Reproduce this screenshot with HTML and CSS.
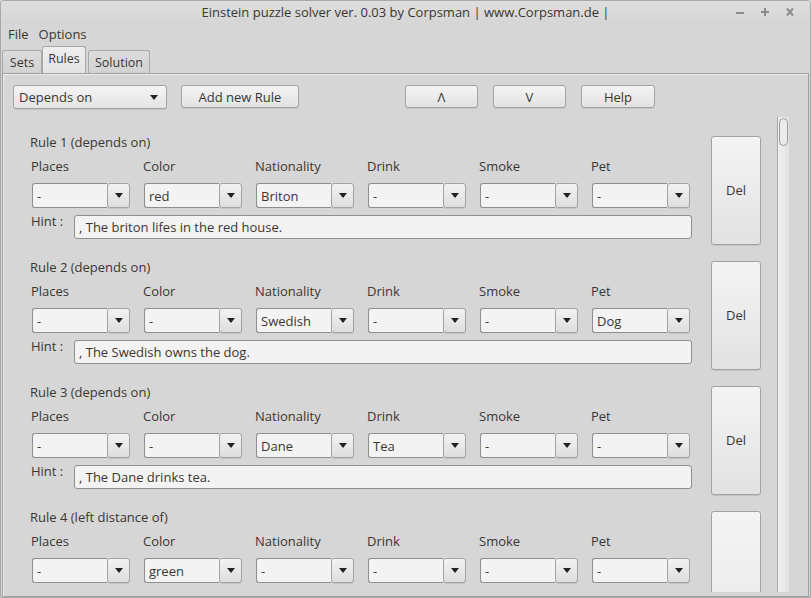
FILE: index.html
```html
<!DOCTYPE html>
<html>
<head>
<meta charset="utf-8">
<link rel="stylesheet" href="styles.css">
</head>
<body>
<div class="window">
  <div class="titlebar">
    <span class="title">Einstein puzzle solver ver. 0.03 by Corpsman | www.Corpsman.de |</span>
    <div class="controls">
      <svg width="10" height="10" viewBox="0 0 10 10"><rect x="1" y="5" width="8" height="2" fill="#8c8c8c"/></svg>
      <svg width="10" height="10" viewBox="0 0 10 10"><rect x="1" y="4" width="8" height="2" fill="#8c8c8c"/><rect x="4" y="1" width="2" height="8" fill="#8c8c8c"/></svg>
      <svg width="10" height="10" viewBox="0 0 10 10"><path d="M2 1.5 L8 8.5 M8 1.5 L2 8.5" stroke="#8c8c8c" stroke-width="2"/></svg>
    </div>
  </div>
  <div class="menubar"><span class="menu">File</span><span class="menu">Options</span></div>
  <div class="tabs">
    <div class="tab sets">Sets</div>
    <div class="tab active">Rules</div>
    <div class="tab solution">Solution</div>
  </div>
  <div class="panel">
    <div class="toolbar">
      <div class="bigcombo"><span>Depends on</span><span class="arrow"></span></div>
      <div class="btn add">Add new Rule</div>
      <div class="btn up">Λ</div>
      <div class="btn down">V</div>
      <div class="btn help">Help</div>
    </div>
    <div class="scrollarea">
      <div class="rules">
        <div class="rule">
          <div class="rule-main">
            <div class="rule-title">Rule 1 (depends on)</div>
            <div class="labels"><span>Places</span><span>Color</span><span>Nationality</span><span>Drink</span><span>Smoke</span><span>Pet</span></div>
            <div class="combos">
              <div class="combo"><div class="edit">-</div><div class="drop"><span class="arrow"></span></div></div>
              <div class="combo"><div class="edit">red</div><div class="drop"><span class="arrow"></span></div></div>
              <div class="combo"><div class="edit">Briton</div><div class="drop"><span class="arrow"></span></div></div>
              <div class="combo"><div class="edit">-</div><div class="drop"><span class="arrow"></span></div></div>
              <div class="combo"><div class="edit">-</div><div class="drop"><span class="arrow"></span></div></div>
              <div class="combo"><div class="edit">-</div><div class="drop"><span class="arrow"></span></div></div>
            </div>
            <div class="hint"><span class="hint-label">Hint :</span><div class="hint-input">, The briton lifes in the red house.</div></div>
          </div>
          <div class="btn del">Del</div>
        </div>
        <div class="rule">
          <div class="rule-main">
            <div class="rule-title">Rule 2 (depends on)</div>
            <div class="labels"><span>Places</span><span>Color</span><span>Nationality</span><span>Drink</span><span>Smoke</span><span>Pet</span></div>
            <div class="combos">
              <div class="combo"><div class="edit">-</div><div class="drop"><span class="arrow"></span></div></div>
              <div class="combo"><div class="edit">-</div><div class="drop"><span class="arrow"></span></div></div>
              <div class="combo"><div class="edit">Swedish</div><div class="drop"><span class="arrow"></span></div></div>
              <div class="combo"><div class="edit">-</div><div class="drop"><span class="arrow"></span></div></div>
              <div class="combo"><div class="edit">-</div><div class="drop"><span class="arrow"></span></div></div>
              <div class="combo"><div class="edit">Dog</div><div class="drop"><span class="arrow"></span></div></div>
            </div>
            <div class="hint"><span class="hint-label">Hint :</span><div class="hint-input">, The Swedish owns the dog.</div></div>
          </div>
          <div class="btn del">Del</div>
        </div>
        <div class="rule">
          <div class="rule-main">
            <div class="rule-title">Rule 3 (depends on)</div>
            <div class="labels"><span>Places</span><span>Color</span><span>Nationality</span><span>Drink</span><span>Smoke</span><span>Pet</span></div>
            <div class="combos">
              <div class="combo"><div class="edit">-</div><div class="drop"><span class="arrow"></span></div></div>
              <div class="combo"><div class="edit">-</div><div class="drop"><span class="arrow"></span></div></div>
              <div class="combo"><div class="edit">Dane</div><div class="drop"><span class="arrow"></span></div></div>
              <div class="combo"><div class="edit">Tea</div><div class="drop"><span class="arrow"></span></div></div>
              <div class="combo"><div class="edit">-</div><div class="drop"><span class="arrow"></span></div></div>
              <div class="combo"><div class="edit">-</div><div class="drop"><span class="arrow"></span></div></div>
            </div>
            <div class="hint"><span class="hint-label">Hint :</span><div class="hint-input">, The Dane drinks tea.</div></div>
          </div>
          <div class="btn del">Del</div>
        </div>
        <div class="rule">
          <div class="rule-main">
            <div class="rule-title">Rule 4 (left distance of)</div>
            <div class="labels"><span>Places</span><span>Color</span><span>Nationality</span><span>Drink</span><span>Smoke</span><span>Pet</span></div>
            <div class="combos">
              <div class="combo"><div class="edit">-</div><div class="drop"><span class="arrow"></span></div></div>
              <div class="combo"><div class="edit">green</div><div class="drop"><span class="arrow"></span></div></div>
              <div class="combo"><div class="edit">-</div><div class="drop"><span class="arrow"></span></div></div>
              <div class="combo"><div class="edit">-</div><div class="drop"><span class="arrow"></span></div></div>
              <div class="combo"><div class="edit">-</div><div class="drop"><span class="arrow"></span></div></div>
              <div class="combo"><div class="edit">-</div><div class="drop"><span class="arrow"></span></div></div>
            </div>
          </div>
          <div class="btn del blank"></div>
        </div>
      </div>
      <div class="scrollbar"><div class="thumb"></div></div>
    </div>
  </div>
</div>
</body>
</html>
```

FILE: styles.css
```css
* { box-sizing: border-box; }
html, body { margin: 0; padding: 0; }
body {
  width: 811px;
  height: 598px;
  overflow: hidden;
  font-family: "Open Sans", "DejaVu Sans", sans-serif;
  font-size: 13px;
  color: #3a3632;
  background: #d6d6d6;
}
.window {
  width: 811px;
  height: 598px;
  border: 1px solid #a9a9a9;
  border-radius: 4px 4px 0 0;
  background: #d6d6d6;
  display: flex;
  flex-direction: column;
  overflow: hidden;
}
.titlebar {
  height: 21px;
  flex: none;
  display: flex;
  align-items: center;
  justify-content: center;
  position: relative;
  background: linear-gradient(#dedede, #d6d6d6);
  font-size: 13px;
}
.title { margin-top: 1px; }
.controls {
  position: absolute;
  right: 15px;
  top: 6px;
  display: flex;
  gap: 15px;
}
.controls svg { display: block; }
.menubar {
  height: 24px;
  flex: none;
  display: flex;
  align-items: center;
  padding-left: 7px;
  gap: 10px;
}
.tabs {
  height: 27px;
  flex: none;
  display: flex;
  align-items: flex-end;
  padding-left: 1px;
}
.tab {
  height: 23px;
  border: 1px solid #a8a8a8;
  border-bottom: none;
  border-radius: 3px 3px 0 0;
  background: linear-gradient(#dcdcdc, #d2d2d2);
  display: flex;
  align-items: center;
  justify-content: center;
  font-size: 12.5px;
  flex: none;
}
.tab.sets { width: 40px; }
.tab.solution { width: 62px; margin-left: 2px; }
.tab.active {
  width: 44px;
  height: 27px;
  background: linear-gradient(#eeeeee, #e4e4e4);
  align-items: flex-start;
  padding-top: 3px;
}
.panel {
  flex: 1;
  margin: 0 1px 0 1px;
  border: 1px solid #a0a0a0;
  box-shadow: inset 1px 1px 0 #ececec;
  display: flex;
  flex-direction: column;
  overflow: hidden;
  padding-bottom: 4px;
}
.toolbar {
  flex: none;
  display: flex;
  align-items: flex-start;
  padding: 11px 0 0 10px;
  height: 43px;
}
.btn {
  height: 23px;
  border: 1px solid #a3a3a3;
  border-radius: 3px;
  background: linear-gradient(#f4f4f4, #e2e2e2);
  box-shadow: 0 1px 0 #c4c4c4;
  display: flex;
  align-items: center;
  justify-content: center;
  flex: none;
}
.bigcombo {
  width: 154px;
  height: 24px;
  border: 1px solid #a3a3a3;
  border-radius: 3px;
  background: linear-gradient(#f4f4f4, #e4e4e4);
  box-shadow: 0 1px 0 #c4c4c4;
  display: flex;
  align-items: center;
  justify-content: space-between;
  padding: 0 8px 0 5px;
  flex: none;
}
.arrow {
  width: 0;
  height: 0;
  border-left: 4px solid transparent;
  border-right: 4px solid transparent;
  border-top: 5px solid #222;
}
.add { width: 118px; margin-left: 14px; }
.up { width: 73px; margin-left: 106px; }
.down { width: 73px; margin-left: 15px; }
.help { width: 74px; margin-left: 15px; }
.scrollarea {
  flex: 1;
  display: flex;
  overflow: hidden;
  width: 786px;
}
.rules {
  flex: 1;
  padding: 12px 0 0 27px;
}
.rule {
  height: 125px;
  display: flex;
}
.rule-main {
  width: 662px;
  flex: none;
  padding-top: 5px;
}
.rule-title {
  height: 16px;
  line-height: 16px;
}
.labels {
  display: flex;
  margin-top: 8px;
  height: 16px;
  line-height: 16px;
  padding-left: 1px;
}
.labels span { width: 112px; flex: none; }
.combos {
  display: flex;
  margin-top: 9px;
  padding-left: 2px;
}
.combo {
  width: 98px;
  height: 25px;
  margin-right: 14px;
  display: flex;
  flex: none;
}
.edit {
  width: 75px;
  height: 25px;
  border: 1px solid #8e8e8e;
  border-right: none;
  border-radius: 3px 0 0 3px;
  background: #f3f3f3;
  padding: 0 4px;
  display: flex;
  align-items: center;
}
.drop {
  width: 23px;
  height: 25px;
  border: 1px solid #a3a3a3;
  border-radius: 3px;
  background: linear-gradient(#f2f2f2, #dedede);
  box-shadow: 0 1px 0 #c4c4c4;
  display: flex;
  align-items: center;
  justify-content: center;
}
.hint {
  display: flex;
  margin-top: 7px;
  padding-left: 1px;
}
.hint-label {
  width: 43px;
  line-height: 16px;
  margin-top: -2px;
}
.hint-input {
  width: 618px;
  height: 24px;
  border: 1px solid #8e8e8e;
  border-radius: 3px;
  background: #f3f3f3;
  padding: 0 4px;
  display: flex;
  align-items: center;
}
.del {
  width: 50px;
  height: 109px;
  margin: 7px 0 0 19px;
  padding-bottom: 2px;
}
.del.blank { height: 140px; background: linear-gradient(#f4f4f4, #e8e8e8); }
.scrollbar {
  width: 12px;
  flex: none;
  border-left: 1px solid #a8a8a8;
  background: linear-gradient(90deg, #f0f0f0, #e2e2e2);
  padding: 1px 0 0 1px;
}
.thumb {
  width: 9px;
  height: 28px;
  border: 1px solid #9a9a9a;
  border-radius: 5px;
  background: #ebebeb;
}
```
